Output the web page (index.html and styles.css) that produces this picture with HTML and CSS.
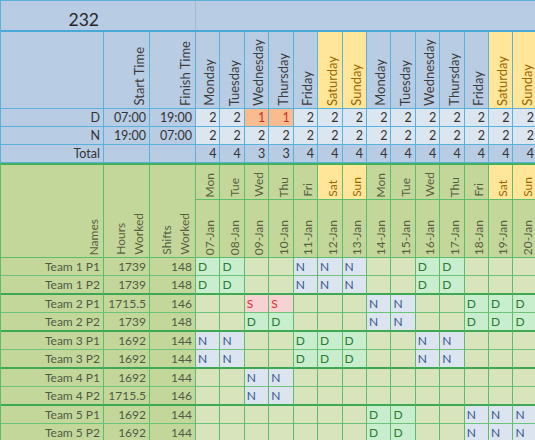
FILE: index.html
```html
<!DOCTYPE html>
<html>
<head>
<meta charset="utf-8">
<link rel="stylesheet" href="styles.css">
</head>
<body>
<div class="sheet">
  <div class="top">
    <div class="title">
      <div class="tnum">232</div>
      <div class="trest"></div>
    </div>
    <div class="trow hdr">
      <div></div>
      <div class="rot"><span>Start Time</span></div>
      <div class="rot"><span>Finish Time</span></div>
      <div class="rot"><span>Monday</span></div>
      <div class="rot"><span>Tuesday</span></div>
      <div class="rot"><span>Wednesday</span></div>
      <div class="rot"><span>Thursday</span></div>
      <div class="rot"><span>Friday</span></div>
      <div class="rot wk"><span>Saturday</span></div>
      <div class="rot wk"><span>Sunday</span></div>
      <div class="rot"><span>Monday</span></div>
      <div class="rot"><span>Tuesday</span></div>
      <div class="rot"><span>Wednesday</span></div>
      <div class="rot"><span>Thursday</span></div>
      <div class="rot"><span>Friday</span></div>
      <div class="rot wk"><span>Saturday</span></div>
      <div class="rot wk"><span>Sunday</span></div>
    </div>
    <div class="trow val">
      <div>D</div><div>07:00</div><div>19:00</div>
      <div class="lb">2</div><div class="lb">2</div><div class="or">1</div><div class="or">1</div><div class="lb">2</div><div class="lb">2</div><div class="lb">2</div>
      <div class="lb">2</div><div class="lb">2</div><div class="lb">2</div><div class="lb">2</div><div class="lb">2</div><div class="lb">2</div><div class="lb">2</div>
    </div>
    <div class="trow val">
      <div>N</div><div>19:00</div><div>07:00</div>
      <div class="lb">2</div><div class="lb">2</div><div class="lb">2</div><div class="lb">2</div><div class="lb">2</div><div class="lb">2</div><div class="lb">2</div>
      <div class="lb">2</div><div class="lb">2</div><div class="lb">2</div><div class="lb">2</div><div class="lb">2</div><div class="lb">2</div><div class="lb">2</div>
    </div>
    <div class="trow val">
      <div>Total</div><div></div><div></div>
      <div>4</div><div>4</div><div>3</div><div>3</div><div>4</div><div>4</div><div>4</div>
      <div>4</div><div>4</div><div>4</div><div>4</div><div>4</div><div>4</div><div>4</div>
    </div>
  </div>

  <div class="bot">
    <div class="bhdr">
      <div class="rot span2"><span>Names</span></div>
      <div class="rot span2"><span class="two">Hours<br>Worked</span></div>
      <div class="rot span2"><span class="two">Shifts<br>Worked</span></div>
      <div class="rot"><span>Mon</span></div>
      <div class="rot"><span>Tue</span></div>
      <div class="rot"><span>Wed</span></div>
      <div class="rot"><span>Thu</span></div>
      <div class="rot"><span>Fri</span></div>
      <div class="rot wk"><span>Sat</span></div>
      <div class="rot wk"><span>Sun</span></div>
      <div class="rot"><span>Mon</span></div>
      <div class="rot"><span>Tue</span></div>
      <div class="rot"><span>Wed</span></div>
      <div class="rot"><span>Thu</span></div>
      <div class="rot"><span>Fri</span></div>
      <div class="rot wk"><span>Sat</span></div>
      <div class="rot wk"><span>Sun</span></div>
      <div class="rot"><span>07-Jan</span></div>
      <div class="rot"><span>08-Jan</span></div>
      <div class="rot"><span>09-Jan</span></div>
      <div class="rot"><span>10-Jan</span></div>
      <div class="rot"><span>11-Jan</span></div>
      <div class="rot"><span>12-Jan</span></div>
      <div class="rot"><span>13-Jan</span></div>
      <div class="rot"><span>14-Jan</span></div>
      <div class="rot"><span>15-Jan</span></div>
      <div class="rot"><span>16-Jan</span></div>
      <div class="rot"><span>17-Jan</span></div>
      <div class="rot"><span>18-Jan</span></div>
      <div class="rot"><span>19-Jan</span></div>
      <div class="rot"><span>20-Jan</span></div>
    </div>

    <div class="drow">
      <div class="nm">Team 1 P1</div><div class="nm">1739</div><div class="nm">148</div>
      <div class="d">D</div><div class="d">D</div><div></div><div></div><div class="n">N</div><div class="n">N</div><div class="n">N</div>
      <div></div><div></div><div class="d">D</div><div class="d">D</div><div></div><div></div><div></div>
    </div>
    <div class="drow end">
      <div class="nm">Team 1 P2</div><div class="nm">1739</div><div class="nm">148</div>
      <div class="d">D</div><div class="d">D</div><div></div><div></div><div class="n">N</div><div class="n">N</div><div class="n">N</div>
      <div></div><div></div><div class="d">D</div><div class="d">D</div><div></div><div></div><div></div>
    </div>
    <div class="drow">
      <div class="nm">Team 2 P1</div><div class="nm">1715.5</div><div class="nm">146</div>
      <div></div><div></div><div class="s">S</div><div class="s">S</div><div></div><div></div><div></div>
      <div class="n">N</div><div class="n">N</div><div></div><div></div><div class="d">D</div><div class="d">D</div><div class="d">D</div>
    </div>
    <div class="drow end">
      <div class="nm">Team 2 P2</div><div class="nm">1739</div><div class="nm">148</div>
      <div></div><div></div><div class="d">D</div><div class="d">D</div><div></div><div></div><div></div>
      <div class="n">N</div><div class="n">N</div><div></div><div></div><div class="d">D</div><div class="d">D</div><div class="d">D</div>
    </div>
    <div class="drow">
      <div class="nm">Team 3 P1</div><div class="nm">1692</div><div class="nm">144</div>
      <div class="n">N</div><div class="n">N</div><div></div><div></div><div class="d">D</div><div class="d">D</div><div class="d">D</div>
      <div></div><div></div><div class="n">N</div><div class="n">N</div><div></div><div></div><div></div>
    </div>
    <div class="drow end">
      <div class="nm">Team 3 P2</div><div class="nm">1692</div><div class="nm">144</div>
      <div class="n">N</div><div class="n">N</div><div></div><div></div><div class="d">D</div><div class="d">D</div><div class="d">D</div>
      <div></div><div></div><div class="n">N</div><div class="n">N</div><div></div><div></div><div></div>
    </div>
    <div class="drow">
      <div class="nm">Team 4 P1</div><div class="nm">1692</div><div class="nm">144</div>
      <div></div><div></div><div class="n">N</div><div class="n">N</div><div></div><div></div><div></div>
      <div></div><div></div><div></div><div></div><div></div><div></div><div></div>
    </div>
    <div class="drow end">
      <div class="nm">Team 4 P2</div><div class="nm">1715.5</div><div class="nm">146</div>
      <div></div><div></div><div class="n">N</div><div class="n">N</div><div></div><div></div><div></div>
      <div></div><div></div><div></div><div></div><div></div><div></div><div></div>
    </div>
    <div class="drow">
      <div class="nm">Team 5 P1</div><div class="nm">1692</div><div class="nm">144</div>
      <div></div><div></div><div></div><div></div><div></div><div></div><div></div>
      <div class="d">D</div><div class="d">D</div><div></div><div></div><div class="n">N</div><div class="n">N</div><div class="n">N</div>
    </div>
    <div class="drow end">
      <div class="nm">Team 5 P2</div><div class="nm">1692</div><div class="nm">144</div>
      <div></div><div></div><div></div><div></div><div></div><div></div><div></div>
      <div class="d">D</div><div class="d">D</div><div></div><div></div><div class="n">N</div><div class="n">N</div><div class="n">N</div>
    </div>
  </div>
</div>
</body>
</html>
```

FILE: styles.css
```css
* { box-sizing: border-box; margin: 0; padding: 0; }
html, body { width: 535px; height: 440px; overflow: hidden; background: #ffffff; }
body { font-family: Lato, "Open Sans", sans-serif; font-size: 12px; color: #333333; }

.sheet { width: 538px; }

/* ---------- top (blue) block ---------- */
.top {
  background: #b8cce4;
  border-top: 1px solid #5ab2dc;
  border-left: 1px solid #5ab2dc;
}
.title {
  display: grid;
  grid-template-columns: 195px 1fr;
  height: 31px;
  border-bottom: 2px solid #4aa8d8;
}
.tnum {
  border-right: 1px solid #a9b8c9;
  display: flex;
  align-items: flex-end;
  justify-content: flex-end;
  padding-right: 96px;
  font-size: 17.5px;
  line-height: 20px;
  color: #262626;
}
.trow {
  display: grid;
  grid-template-columns: 103px 46px 46px repeat(14, 24.43px);
}
.trow > div {
  border-right: 1px solid #5ab2dc;
  border-bottom: 1px solid #5ab2dc;
}
.hdr { height: 77px; }
.hdr .rot span { font-size: 13px; color: #3c3c3c; }
.val { height: 18px; }
.val > div {
  text-align: right;
  padding-right: 3px;
  line-height: 17px;
  color: #333333;
  font-size: 12.5px;
}
.lb { background: #dce6f1; }
.or { background: #f8bc8e; color: #d0302a !important; }

/* rotated header text */
.rot {
  display: flex;
  align-items: flex-end;
  justify-content: flex-end;
  padding: 0 1px 2px 0;
}
.rot span {
  writing-mode: vertical-rl;
  transform: rotate(180deg);
  line-height: 17px;
  white-space: nowrap;
}
.rot span.two { line-height: 18px; }
.wk { background: #ffe699; }
.wk span { color: #9c6500 !important; }

/* ---------- bottom (green) block ---------- */
.bot {
  border-top: 2px solid #45b05a;
  border-left: 1px solid #5dbd6c;
  background: #c4d79b;
}
.bhdr {
  display: grid;
  grid-template-columns: 103px 46px 46px repeat(14, 24.43px);
  grid-template-rows: 35px 58px;
}
.bhdr > div {
  border-right: 1px solid #5dbd6c;
  border-bottom: 1px solid #5dbd6c;
}
.bhdr .rot span { color: #56603f; font-size: 12px; }
.span2 { grid-row: 1 / span 2; }

.drow {
  display: grid;
  grid-template-columns: 103px 46px 46px repeat(14, 24.43px);
  height: 18px;
}
.drow > div {
  border-right: 1px solid #5dbd6c;
  border-bottom: 1px solid #6cc47a;
  background: #d8e4bc;
  line-height: 17px;
  padding-left: 2px;
}
.drow.end { height: 19px; }
.drow.end > div { border-bottom: 2px solid #3fa855; }
.drow > .nm {
  background: #c4d79b;
  text-align: right;
  padding: 0 3px 0 0;
  color: #4f5a44;
}
.drow > .d { background: #c9eecd; color: #2b7a35; }
.drow > .n { background: #dce5ef; color: #34558f; }
.drow > .s { background: #f7d2d2; color: #e0302c; }
```
